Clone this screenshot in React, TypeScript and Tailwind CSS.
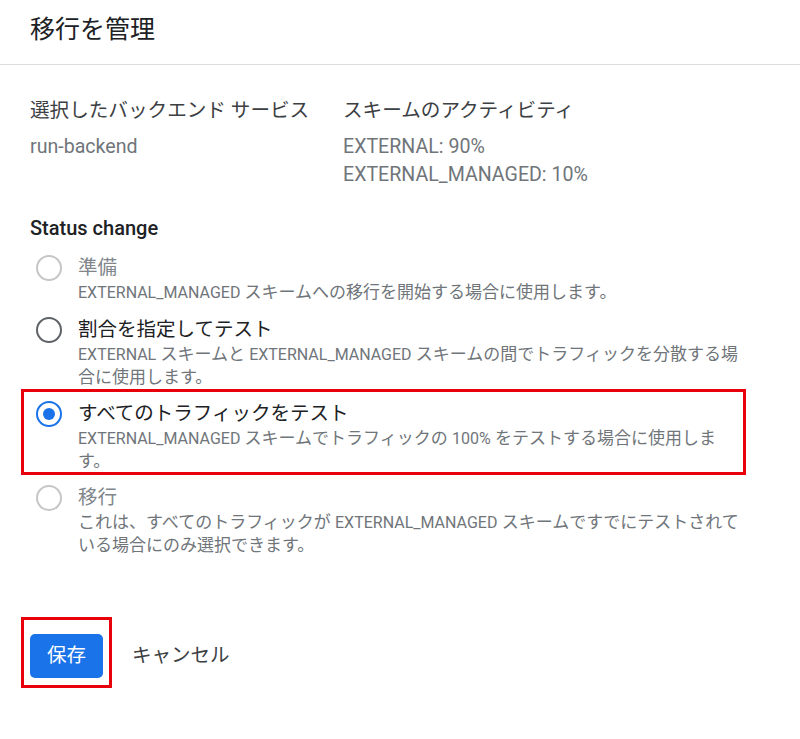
type Option = {
  label: string;
  desc: string[];
  state: "disabled" | "idle" | "checked";
  marked?: boolean;
};

const options: Option[] = [
  {
    label: "準備",
    desc: ["EXTERNAL_MANAGED スキームへの移行を開始する場合に使用します。"],
    state: "disabled",
  },
  {
    label: "割合を指定してテスト",
    desc: ["EXTERNAL スキームと EXTERNAL_MANAGED スキームの間でトラフィックを分散する場合に使用します。"],
    state: "idle",
  },
  {
    label: "すべてのトラフィックをテスト",
    desc: ["EXTERNAL_MANAGED スキームでトラフィックの 100% をテストする場合に使用しま", "す。"],
    state: "checked",
    marked: true,
  },
  {
    label: "移行",
    desc: ["これは、すべてのトラフィックが EXTERNAL_MANAGED スキームですでにテストされている場合にのみ選択できます。"],
    state: "disabled",
  },
];

// latin runs render a touch smaller than the kana around them
function Mixed({ text }: { text: string }) {
  const parts = text.split(/([A-Za-z0-9_%:]+)/);
  return (
    <>
      {parts.map((p, i) =>
        i % 2 === 1 ? (
          <span key={i} className="text-[16px] leading-[22px]">
            {p}
          </span>
        ) : (
          p
        )
      )}
    </>
  );
}

function Radio({ state }: { state: Option["state"] }) {
  if (state === "checked") {
    return (
      <span className="flex h-[26px] w-[26px] shrink-0 items-center justify-center rounded-full border-2 border-[#1a73e8]">
        <span className="h-[12px] w-[12px] rounded-full bg-[#1a73e8]" />
      </span>
    );
  }
  return (
    <span
      className={
        state === "disabled"
          ? "h-[26px] w-[26px] shrink-0 rounded-full border-2 border-[#c4c7c5]"
          : "h-[26px] w-[26px] shrink-0 rounded-full border-2 border-[#5f6368]"
      }
    />
  );
}

function OptionRow({ opt }: { opt: Option }) {
  const off = opt.state === "disabled";
  return (
    <div className="relative flex items-start gap-[16px] pl-[6px]">
      <Radio state={opt.state} />
      <div className="flex-1">
        <div
          className={
            off
              ? "text-[19.5px] leading-[26px] text-[#80868b]"
              : "text-[19.5px] leading-[26px] text-[#202124]"
          }
        >
          {opt.label}
        </div>
        {opt.desc.map((line) => (
          <div key={line} className="text-[17px] leading-[22px] text-[#70757a]">
            <Mixed text={line} />
          </div>
        ))}
      </div>
      {opt.marked && (
        <div className="pointer-events-none absolute -left-[9px] -top-[12px] -bottom-[3px] right-[4px] border-[3px] border-[#e8000b]" />
      )}
    </div>
  );
}

export default function App() {
  return (
    <div className="h-[739px] w-[800px] bg-white font-['Roboto','Noto_Sans_CJK_JP',sans-serif]">
      <header className="border-b border-[#dadce0] px-[30px] pt-[14px] pb-[18px]">
        <h1 className="text-[25px] leading-[32px] text-[#202124]">移行を管理</h1>
      </header>

      <main className="px-[30px] pt-[32px]">
        <div className="flex">
          <div className="w-[313px]">
            <div className="mb-[8px] text-[19.6px] leading-[28px] text-[#3c4043]">
              選択したバックエンド サービス
            </div>
            <div className="text-[19.6px] leading-[28px] text-[#70757a]">run-backend</div>
          </div>
          <div>
            <div className="mb-[8px] text-[19.6px] leading-[28px] text-[#3c4043]">
              スキームのアクティビティ
            </div>
            <div className="text-[19.6px] leading-[28px] text-[#70757a]">EXTERNAL: 90%</div>
            <div className="text-[19.6px] leading-[28px] text-[#70757a]">
              EXTERNAL_MANAGED: 10%
            </div>
          </div>
        </div>

        <div className="mt-[25px] text-[20px] font-medium leading-[28px] text-[#202124]">
          Status change
        </div>

        <div className="mt-[13px] flex w-[720px] flex-col gap-[13px]">
          {options.map((o) => (
            <OptionRow key={o.label} opt={o} />
          ))}
        </div>

        <div className="mt-[78px] flex items-start">
          <div className="relative">
            <button className="h-[44px] w-[73px] rounded-[5px] bg-[#1a73e8] text-[19.5px] text-white">
              保存
            </button>
            <div className="pointer-events-none absolute -left-[9px] -right-[9px] -top-[17px] -bottom-[10px] border-[3px] border-[#e8000b]" />
          </div>
          <button className="ml-[29px] mt-[8px] text-[19.5px] leading-[28px] text-[#3c4043]">
            キャンセル
          </button>
        </div>
      </main>
    </div>
  );
}
